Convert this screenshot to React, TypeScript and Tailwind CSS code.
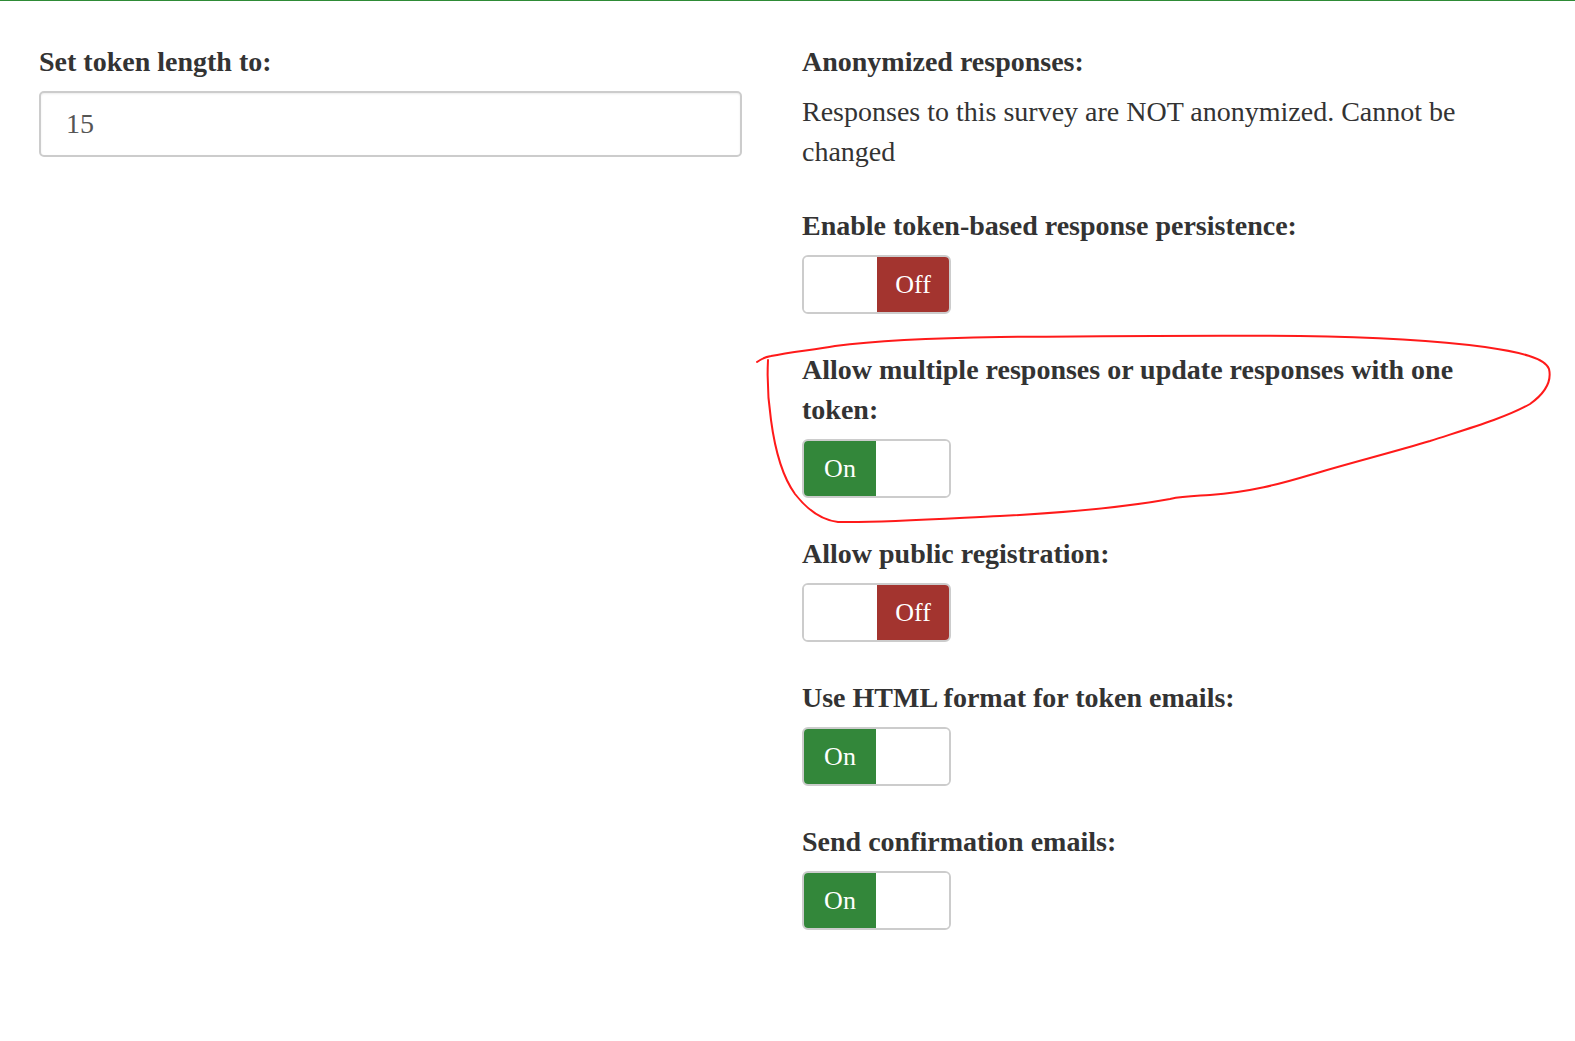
import React from 'react';

interface ToggleProps {
  on: boolean;
}

function Toggle({ on }: ToggleProps) {
  return (
    <div className="mt-[9px] flex h-[59px] w-[149px] overflow-hidden rounded-[6px] border-2 border-[#cccccc] bg-white">
      {on ? (
        <>
          <div className="flex w-[72px] items-center justify-center bg-[#33873a] text-[26px] text-white">On</div>
          <div className="flex-1 bg-white" />
        </>
      ) : (
        <>
          <div className="w-[73px] bg-white" />
          <div className="flex flex-1 items-center justify-center bg-[#a3342f] text-[26px] text-white">Off</div>
        </>
      )}
    </div>
  );
}

interface SettingProps {
  label: string;
  on: boolean;
}

function SwitchSetting({ label, on }: SettingProps) {
  return (
    <div className="mb-[36px]">
      <label className="block font-bold">{label}</label>
      <Toggle on={on} />
    </div>
  );
}

export default function App() {
  return (
    <div
      className="relative min-h-[1041px] bg-white text-[28px] leading-[40px] text-[#333333]"
      style={{ fontFamily: '"Liberation Serif", "Times New Roman", serif' }}
    >
      <div className="h-px bg-[#2e8b36]" />
      <div className="flex gap-[60px] pl-[39px] pt-[41px]">
        <div className="w-[703px]">
          <label className="block font-bold">Set token length to:</label>
          <div className="mt-[9px] flex h-[66px] items-center rounded-[5px] border-2 border-[#cccccc] px-[25px] text-[#555555] shadow-[inset_0_1px_2px_rgba(0,0,0,0.08)]">
            15
          </div>
        </div>
        <div className="w-[703px]">
          <div className="mb-[34px]">
            <label className="block font-bold">Anonymized responses:</label>
            <p className="mt-[10px]">Responses to this survey are NOT anonymized. Cannot be changed</p>
          </div>
          <SwitchSetting label="Enable token-based response persistence:" on={false} />
          <SwitchSetting label="Allow multiple responses or update responses with one token:" on />
          <SwitchSetting label="Allow public registration:" on={false} />
          <SwitchSetting label="Use HTML format for token emails:" on />
          <SwitchSetting label="Send confirmation emails:" on />
        </div>
      </div>

      {/* hand-drawn highlight around the multiple responses setting */}
      <svg
        className="pointer-events-none absolute left-0 top-0"
        width="1575"
        height="1041"
        viewBox="0 0 1575 1041"
        fill="none"
      >
        <path
          d="M757 362 C761 359 765 357 771 356 C790 352 812 350 835 346 C880 340 930 338 1000 337 C1100 336 1200 335 1300 336 C1380 337 1440 341 1485 347 C1520 352 1545 358 1549 369 C1552 382 1544 394 1530 404 C1505 418 1470 428 1430 441 C1390 453 1350 463 1310 475 C1280 484 1250 492 1210 495 C1195 496 1183 496 1170 499 C1120 508 1060 513 1000 516 C940 519 880 523 838 522 C820 520 806 508 795 494 C782 476 775 450 771 420 C768 400 767 380 768 360"
          stroke="#ff1a1a"
          strokeWidth="2"
          strokeLinecap="round"
          strokeLinejoin="round"
        />
      </svg>
    </div>
  );
}
